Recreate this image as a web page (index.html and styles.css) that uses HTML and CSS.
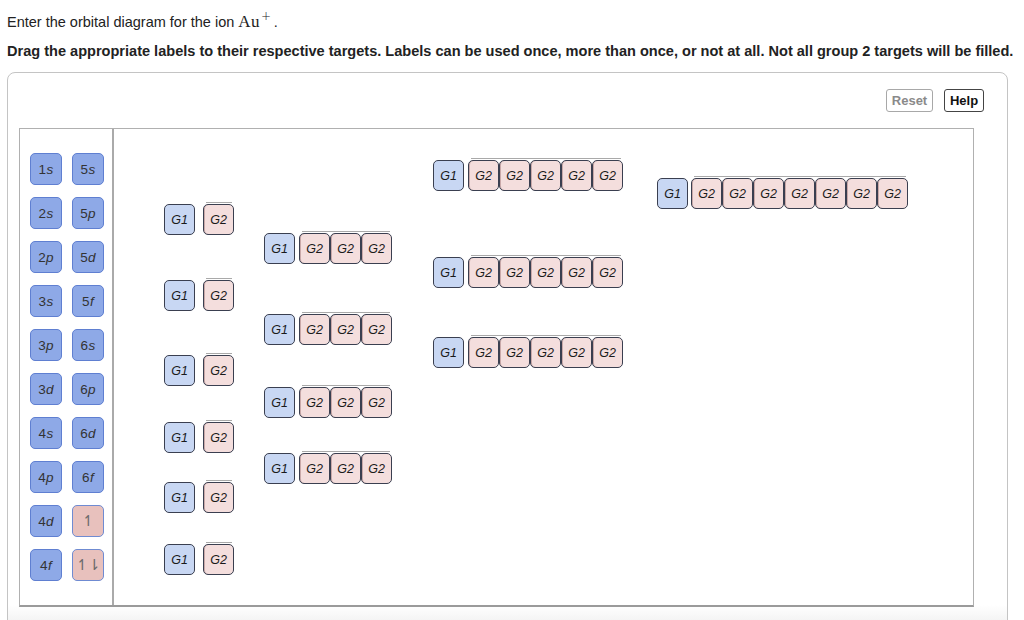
FILE: index.html
```html
<!DOCTYPE html>
<html>
<head>
<meta charset="utf-8">
<link rel="stylesheet" href="styles.css">
</head>
<body>
<p class="prompt">Enter the orbital diagram for the ion <span class="math">Au<sup>+</sup></span>.</p>
<p class="instr">Drag the appropriate labels to their respective targets. Labels can be used once, more than once, or not at all. Not all group 2 targets will be filled.</p>
<div class="panel">
  <div class="toolbar">
    <button class="btn btn-reset">Reset</button>
    <button class="btn btn-help">Help</button>
  </div>
  <div class="canvas">
    <div class="palette">
      <div class="tile">1<i>s</i></div><div class="tile">5<i>s</i></div>
      <div class="tile">2<i>s</i></div><div class="tile">5<i>p</i></div>
      <div class="tile">2<i>p</i></div><div class="tile">5<i>d</i></div>
      <div class="tile">3<i>s</i></div><div class="tile">5<i>f</i></div>
      <div class="tile">3<i>p</i></div><div class="tile">6<i>s</i></div>
      <div class="tile">3<i>d</i></div><div class="tile">6<i>p</i></div>
      <div class="tile">4<i>s</i></div><div class="tile">6<i>d</i></div>
      <div class="tile">4<i>p</i></div><div class="tile">6<i>f</i></div>
      <div class="tile">4<i>d</i></div><div class="tile arrow">↿</div>
      <div class="tile">4<i>f</i></div><div class="tile arrow">↿⇂</div>
    </div>
    <div class="board">
      <div class="grp grp-s" style="top:75px"><div class="g1">G1</div><div class="g2s"><div class="g2">G2</div></div></div>
      <div class="grp grp-s" style="top:151px"><div class="g1">G1</div><div class="g2s"><div class="g2">G2</div></div></div>
      <div class="grp grp-s" style="top:226px"><div class="g1">G1</div><div class="g2s"><div class="g2">G2</div></div></div>
      <div class="grp grp-s" style="top:293px"><div class="g1">G1</div><div class="g2s"><div class="g2">G2</div></div></div>
      <div class="grp grp-s" style="top:353px"><div class="g1">G1</div><div class="g2s"><div class="g2">G2</div></div></div>
      <div class="grp grp-s" style="top:415px"><div class="g1">G1</div><div class="g2s"><div class="g2">G2</div></div></div>

      <div class="grp grp-p" style="top:104px"><div class="g1">G1</div><div class="g2s"><div class="g2">G2</div><div class="g2">G2</div><div class="g2">G2</div></div></div>
      <div class="grp grp-p" style="top:185px"><div class="g1">G1</div><div class="g2s"><div class="g2">G2</div><div class="g2">G2</div><div class="g2">G2</div></div></div>
      <div class="grp grp-p" style="top:258px"><div class="g1">G1</div><div class="g2s"><div class="g2">G2</div><div class="g2">G2</div><div class="g2">G2</div></div></div>
      <div class="grp grp-p" style="top:324px"><div class="g1">G1</div><div class="g2s"><div class="g2">G2</div><div class="g2">G2</div><div class="g2">G2</div></div></div>

      <div class="grp grp-d" style="top:31px"><div class="g1">G1</div><div class="g2s"><div class="g2">G2</div><div class="g2">G2</div><div class="g2">G2</div><div class="g2">G2</div><div class="g2">G2</div></div></div>
      <div class="grp grp-d" style="top:128px"><div class="g1">G1</div><div class="g2s"><div class="g2">G2</div><div class="g2">G2</div><div class="g2">G2</div><div class="g2">G2</div><div class="g2">G2</div></div></div>
      <div class="grp grp-d" style="top:208px"><div class="g1">G1</div><div class="g2s"><div class="g2">G2</div><div class="g2">G2</div><div class="g2">G2</div><div class="g2">G2</div><div class="g2">G2</div></div></div>

      <div class="grp grp-f" style="top:49px"><div class="g1">G1</div><div class="g2s"><div class="g2">G2</div><div class="g2">G2</div><div class="g2">G2</div><div class="g2">G2</div><div class="g2">G2</div><div class="g2">G2</div><div class="g2">G2</div></div></div>
    </div>
  </div>
</div>
</body>
</html>
```

FILE: styles.css
```css
html, body {
  margin: 0;
  padding: 0;
  background: #fff;
}
body {
  font-family: "Liberation Sans", Arial, Helvetica, sans-serif;
  font-size: 13px;
  color: #222;
  padding: 0 0 0 7px;
  overflow: hidden;
}
.prompt {
  margin: 0;
  padding-top: 13px;
  font-size: 14.5px;
  line-height: 18px;
  height: 18px;
}
.math {
  font-family: "Liberation Serif", "Times New Roman", serif;
  font-size: 17px;
  letter-spacing: 0.5px;
  margin-right: 2px;
}
.math sup {
  font-family: "DejaVu Sans", sans-serif;
  font-size: 12px;
  font-weight: 300;
  vertical-align: 7px;
  line-height: 0;
  margin-left: 1px;
}
.instr {
  margin: 0;
  padding-top: 12px;
  font-weight: bold;
  font-size: 14.55px;
  line-height: 17px;
}
.panel {
  margin-top: 12px;
  width: 1001px;
  height: 560px;
  box-sizing: border-box;
  border: 1px solid #c4c4c4;
  border-radius: 8px;
  padding: 16px 34px 0 11px;
  background: linear-gradient(to bottom, #fff 0, #fff 532px, #f2f2f2 550px);
}
.toolbar {
  display: flex;
  justify-content: flex-end;
  gap: 11px;
  margin-right: -11px;
  height: 23px;
}
.btn {
  font-family: "Liberation Sans", Arial, sans-serif;
  font-size: 13px;
  font-weight: bold;
  height: 23px;
  padding: 0 4px;
  border-radius: 3px;
  background: #fff;
  line-height: 21px;
}
.btn-reset {
  width: 47px;
  color: #8a8a8a;
  border: 1px solid #a8a8a8;
}
.btn-help {
  width: 40px;
  color: #111;
  border: 1px solid #444;
}
.canvas {
  margin-top: 16px;
  width: 955px;
  height: 479px;
  box-sizing: border-box;
  border: 1px solid #b0b0b0;
  border-bottom: 2px solid #9a9a9a;
  display: flex;
}
.palette {
  width: 94px;
  box-sizing: border-box;
  border-right: 2px solid #aaa;
  display: grid;
  grid-template-columns: 32px 32px;
  grid-auto-rows: 32px;
  column-gap: 10px;
  row-gap: 12px;
  padding: 24px 0 0 10px;
  align-content: start;
}
.tile {
  box-sizing: border-box;
  background: #8ea9e7;
  border: 1px solid #5f7fd1;
  border-radius: 5px;
  color: #333;
  font-size: 13.5px;
  display: flex;
  align-items: center;
  justify-content: center;
  letter-spacing: 0.3px;
}
.tile i {
  font-style: italic;
}
.tile.arrow {
  background: #e8c1bd;
  border-color: #6f8bd2;
  color: #6a6a6a;
  font-size: 15px;
  font-family: "DejaVu Sans", sans-serif;
  font-weight: 300;
  letter-spacing: -1px;
}
.board {
  position: relative;
  flex: 1;
}
.grp {
  position: absolute;
  display: flex;
  align-items: flex-start;
}
.grp-s { left: 50px; gap: 8px; }
.grp-p { left: 150px; gap: 4px; }
.grp-d { left: 319px; gap: 4px; }
.grp-f { left: 543px; gap: 3px; }
.g1, .g2 {
  box-sizing: border-box;
  width: 31px;
  height: 31px;
  border: 1px solid #3a3f50;
  border-radius: 5px;
  display: flex;
  align-items: center;
  justify-content: center;
  font-style: italic;
  font-size: 12.5px;
  color: #1a1a1a;
}
.g1 {
  background: #c8d7f3;
}
.g2s {
  display: flex;
  position: relative;
}
.g2s::before {
  content: "";
  position: absolute;
  top: -2px;
  left: 3px;
  right: 2px;
  height: 1px;
  background: #a9a9a9;
}
.g2 {
  background: #f4dedd;
  box-shadow: inset 1px 0 0 #c9a9a9;
}
```
